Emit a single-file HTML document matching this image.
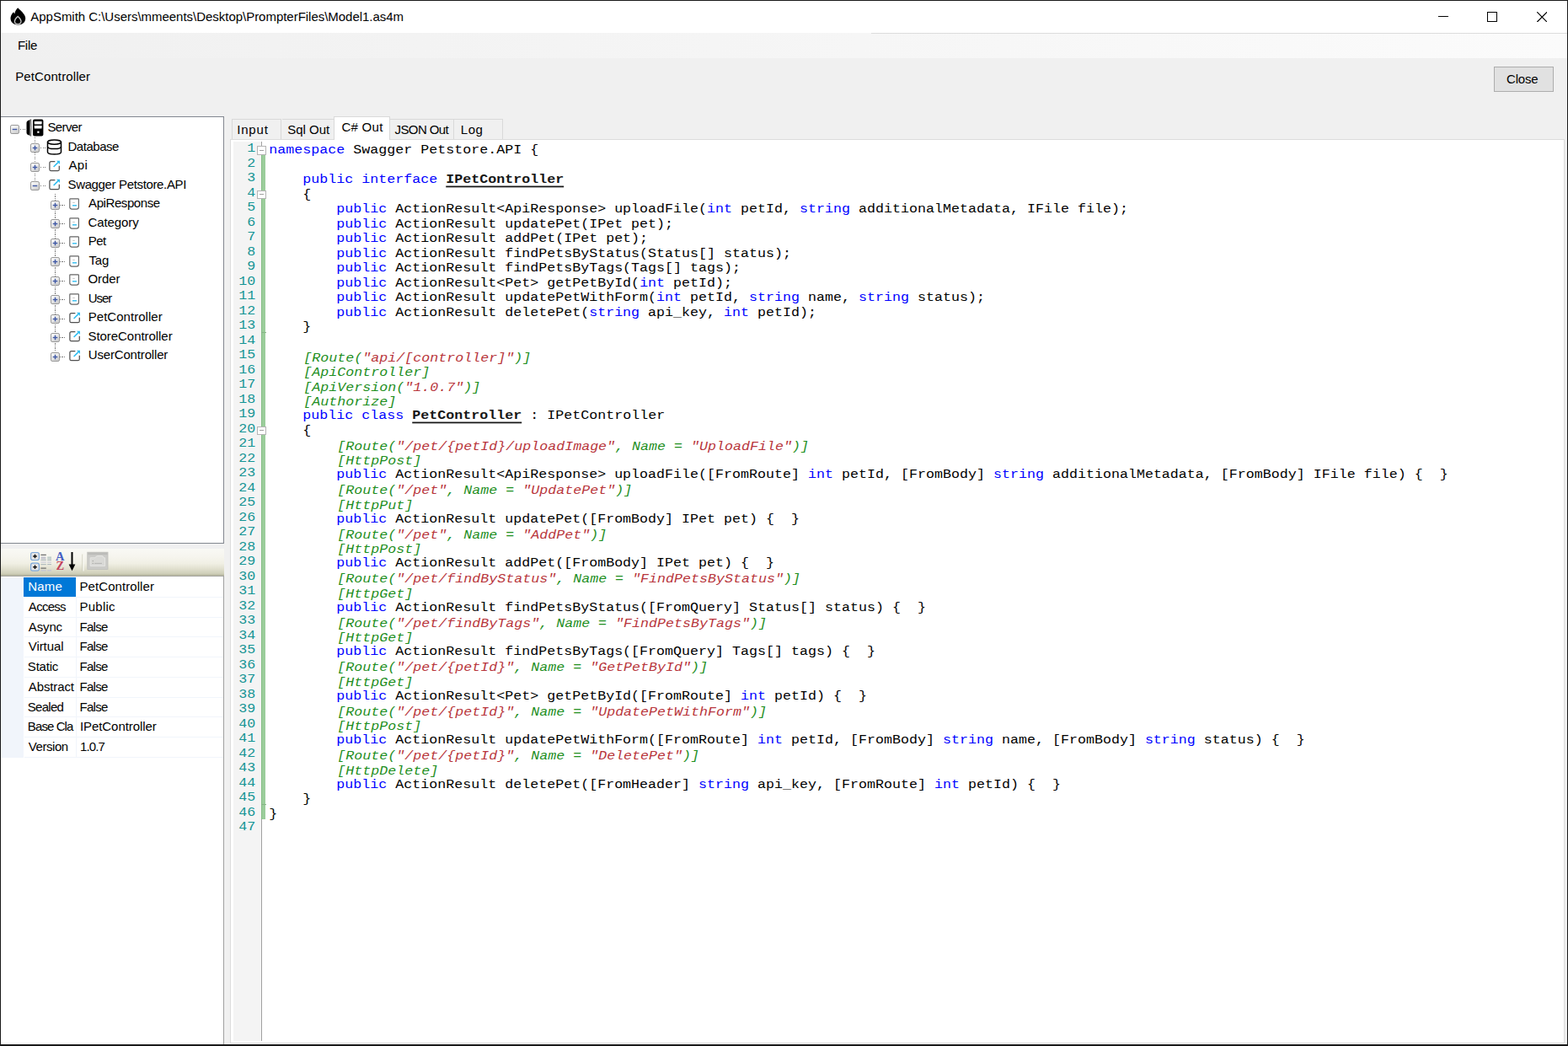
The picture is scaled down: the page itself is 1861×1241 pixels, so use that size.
<!DOCTYPE html>
<html lang="en">
<head>
<meta charset="utf-8">
<title>AppSmith</title>
<style>
*{box-sizing:border-box;margin:0;padding:0}
html,body{width:1861px;height:1241px;overflow:hidden;background:#f0f0f0}
body{position:relative;font-family:"Liberation Sans",sans-serif;font-size:15px;color:#000}
#win{position:absolute;left:0;top:0;width:1861px;height:1241px;background:#f0f0f0;overflow:hidden}
.abs{position:absolute}
/* frame */
#bt{left:0;top:0;width:1861px;height:1px;background:#1a1a1a}
#bl{left:0;top:0;width:1.3px;height:1241px;background:#1a1a1a}
#br{left:1860px;top:0;width:1px;height:1241px;background:#1a1a1a}
#bb{left:0;top:1239.3px;width:1861px;height:1.7px;background:#1a1a1a}
#title{left:1.3px;top:1px;width:1858.7px;height:38.2px;background:#fff}
#ttext{left:36.3px;top:10.5px;line-height:18px;white-space:pre;font-size:15px}
#menu{left:1.3px;top:39.2px;width:1858.7px;height:29.6px;background:linear-gradient(90deg,#f0f0f0 0%,#f1f1f1 8%,#f6f6f6 55%,#fbfbfb 100%)}
#mline{left:1034px;top:39px;width:826px;height:1px;background:#dcdcdc}
#mfile{left:20.9px;top:44.5px;line-height:18px;white-space:pre}
#plabel{left:18.2px;top:82px;line-height:18px;white-space:pre}
#close{left:1772.6px;top:79px;width:71.2px;height:29.8px;background:#e1e1e1;border:1px solid #adadad}
#closet{left:1788.0px;top:84.6px;line-height:18px;white-space:pre;letter-spacing:-0.175px}
/* tree */
#tree{left:1.3px;top:138.1px;width:264.7px;height:507.1px;background:#fff;border:1px solid #828790;border-left:0}
.dv{position:absolute;width:1px;background:repeating-linear-gradient(180deg,#7a7a7a 0 1.25px,transparent 1.25px 2.5px)}
.dh{position:absolute;height:1px;background:repeating-linear-gradient(90deg,#7a7a7a 0 1.25px,transparent 1.25px 2.5px)}
.ic{position:absolute;overflow:visible}
.tt{position:absolute;line-height:18px;white-space:pre;font-size:15px}
/* property grid */
#pgbg{left:1.3px;top:683.4px;width:264.6px;height:556.4px;background:#fff;border-top:1px solid #a5a5a0;border-right:1.1px solid #a0a0a0}
#pgtb{left:1.3px;top:650.7px;width:264.6px;height:32.8px;background:linear-gradient(180deg,#f9f9f5 0%,#f6f5ee 30%,#f0efe4 55%,#e0dfce 75%,#cfcfb9 92%,#b3b39b 100%)}
.pgm{position:absolute;left:1.3px;width:27.2px;background:#f1f5fb}
.pgv{position:absolute;left:90px;width:1px;background:#f1f5fb}
.pgh{position:absolute;left:28.5px;width:236.7px;height:1px;background:#f1f5fb}
.psel{position:absolute;left:28.4px;width:61.7px;background:#0078d7}
.pt{position:absolute;white-space:pre;font-size:15px;line-height:18px}
/* tabs */
.tab{position:absolute;top:141px;height:25px;background:#f0f0f0;border:1px solid #d9d9d9;border-bottom:0;border-left-width:0}
.tbt{position:absolute;white-space:pre;font-size:15px;line-height:18px;z-index:4}
.tab.first{border-left-width:1px}
.tsel{top:138.2px;height:28.2px;background:#fff;border:1px solid #d9d9d9;border-bottom:0;z-index:3}
#page{left:272.8px;top:165.2px;width:1584.4px;height:1072.6px;background:#fff;border:1px solid #dcdcdc}
/* editor */
#lm{left:276.8px;top:168px;width:33.4px;height:1066.8px;background:#f4f4f4}
#fl{left:310px;top:168px;width:1px;height:1066.8px;background:#a0a0a0}
#gb{left:310px;top:184px;width:5px;height:788.2px;background:#9bcd9b;border-left:1px solid #86bd86}
.fb{position:absolute;left:305px;width:10.8px;height:10.8px;background:#fff;border:1px solid #b4b4b4}
.fb i{position:absolute;left:2px;top:3.9px;width:4.8px;height:1px;background:#a0a0a0}
#ftick,.ftk{left:310px;top:953.8px;width:6px;height:1px;background:#86b486}
.ln{position:absolute;left:263.3px;width:40px;text-align:right;font-family:"Liberation Mono",monospace;font-size:16.667px;letter-spacing:0px;line-height:17.5px;color:#149494;white-space:pre;transform:scaleY(0.925);transform-origin:0 13.2px}
.cl{position:absolute;font-family:"Liberation Mono",monospace;font-size:16.667px;letter-spacing:0px;line-height:17.5px;color:#000;white-space:pre;transform:scaleY(0.88);transform-origin:0 13.2px}
.k{color:#0000ff}
.a{color:#1f8f1f;font-style:italic}
.s{color:#b8363c;font-style:italic}
.b{font-weight:bold;color:#161616;text-decoration:underline;text-decoration-thickness:1.6px;text-underline-offset:3.6px}

</style>
</head>
<body>
<div id="win">
<svg width="0" height="0" style="position:absolute"><defs><linearGradient id="xbg" x1="0" y1="0" x2="0.6" y2="1"><stop offset="0" stop-color="#fdfdfd"/><stop offset="0.45" stop-color="#ededed"/><stop offset="1" stop-color="#cfcfcf"/></linearGradient></defs></svg>
<div id="title" class="abs"></div>
<svg class="abs" style="left:11.8px;top:8.8px" width="19" height="21" viewBox="0 0 19 21"><path d="M9.2 0.2 C11.4 2.4 16 6 17.6 10 C19.2 14 17.6 18.2 13.6 19.8 C11.4 20.6 7.4 20.6 5.2 19.8 C1.2 18.2 -0.4 14 1 10 C1.6 8.2 2.8 6.6 4.2 5.2 C4.4 6.2 4.8 6.8 5.4 7.2 C5.8 4.4 7.2 2 9.2 0.2 Z" fill="#000"/><path d="M9.2 10.4 C10.8 12 13 13.8 13 16.2 C13 18.2 11.4 19.6 9.2 19.6 C7 19.6 5.4 18.2 5.4 16.2 C5.4 13.8 7.6 12 9.2 10.4 Z" fill="none" stroke="#c4c4c4" stroke-width="1.3"/></svg>
<div id="ttext" class="abs" style="letter-spacing:-0.026px">AppSmith C:\Users\mmeents\Desktop\PrompterFiles\Model1.as4m</div>
<div class="abs" style="left:1707px;top:18.8px;width:12px;height:1.2px;background:#000"></div>
<div class="abs" style="left:1765px;top:14px;width:12.2px;height:12.2px;border:1.2px solid #000"></div>
<svg class="abs" style="left:1824px;top:14px" width="12.4" height="12.4" viewBox="0 0 12.4 12.4"><path d="M0.2 0.2 L12.2 12.2 M12.2 0.2 L0.2 12.2" stroke="#000" stroke-width="1.2" fill="none"/></svg>
<div id="menu" class="abs"></div>
<div id="mline" class="abs"></div>
<div id="mfile" class="abs" style="letter-spacing:-0.233px">File</div>
<div id="plabel" class="abs" style="letter-spacing:0.108px">PetController</div>
<div id="close" class="abs"></div>
<div id="closet" class="abs">Close</div>

<div id="tree" class="abs"></div>
<div class="dv" style="left:41.00px;top:163.20px;height:51.50px"></div>
<div class="dv" style="left:64.80px;top:229.70px;height:187.50px"></div>
<div class="dh" style="left:23.60px;top:152.70px;width:6.50px"></div>
<svg class="ic" style="left:12.10px;top:147.70px" width="11" height="11" viewBox="0 0 11 11"><rect x="0.5" y="0.5" width="10" height="10" rx="1.6" fill="url(#xbg)" stroke="#989898" stroke-width="1"/><path d="M2.7 5.5 H8.3" stroke="#3f58a5" stroke-width="1.4"/></svg>
<svg class="ic" style="left:30.8px;top:141.00px" width="21" height="21" viewBox="0 0 21 21"><path d="M0.5 4.5 Q0.5 2.5 2.5 2 L4.6 1 L4.6 20 L2.5 19 Q0.5 18.5 0.5 16.5 Z" fill="#000"/><path d="M5.6 0.3 Q6.6 10.5 5.6 20.7" stroke="#000" stroke-width="0.7" fill="none"/><rect x="8" y="0.6" width="12.4" height="19.8" rx="2" fill="#000"/><rect x="9.8" y="3" width="8.8" height="3.4" rx="0.4" fill="#fff"/><rect x="9.8" y="8" width="8.8" height="3.4" rx="0.4" fill="#fff"/><rect x="13.3" y="14.6" width="2.2" height="2.2" fill="#fff"/></svg>
<div class="tt" style="left:56.39px;top:142.10px;letter-spacing:-0.604px">Server</div>
<div class="dh" style="left:47.50px;top:175.20px;width:6.50px"></div>
<svg class="ic" style="left:36.00px;top:170.20px" width="11" height="11" viewBox="0 0 11 11"><rect x="0.5" y="0.5" width="10" height="10" rx="1.6" fill="url(#xbg)" stroke="#989898" stroke-width="1"/><path d="M2.7 5.5 H8.3" stroke="#3f58a5" stroke-width="1.4"/><path d="M5.5 2.7 V8.3" stroke="#3f58a5" stroke-width="1.4"/></svg>
<svg class="ic" style="left:55.3px;top:164.50px" width="19" height="19" viewBox="0 0 19 19"><g fill="none" stroke="#000" stroke-width="1.5"><ellipse cx="9.5" cy="3.6" rx="8" ry="2.6"/><path d="M1.5 3.6 V15.2 C1.5 17 5 18 9.5 18 S17.5 17 17.5 15.2 V3.6"/><path d="M1.5 9 C1.5 10.8 5 11.6 9.5 11.6 S17.5 10.8 17.5 9"/></g></svg>
<div class="tt" style="left:80.51px;top:164.60px;letter-spacing:-0.47px">Database</div>
<div class="dh" style="left:47.50px;top:197.70px;width:6.50px"></div>
<svg class="ic" style="left:36.00px;top:192.70px" width="11" height="11" viewBox="0 0 11 11"><rect x="0.5" y="0.5" width="10" height="10" rx="1.6" fill="url(#xbg)" stroke="#989898" stroke-width="1"/><path d="M2.7 5.5 H8.3" stroke="#3f58a5" stroke-width="1.4"/><path d="M5.5 2.7 V8.3" stroke="#3f58a5" stroke-width="1.4"/></svg>
<svg class="ic" style="left:58.0px;top:189.80px" width="14" height="14" viewBox="0 0 14 14"><path d="M7.4 1.7 H2.7 Q0.9 1.7 0.9 3.5 V10.9 Q0.9 12.7 2.7 12.7 H10.5 Q12.3 12.7 12.3 10.9 V6.8" fill="none" stroke="#505050" stroke-width="1.25"/><path d="M5.6 8 L11 2.6" stroke="#2fbdf0" stroke-width="1.5" fill="none"/><path d="M9 0.7 H13 V4.9 Z" fill="#2fbdf0"/></svg>
<div class="tt" style="left:81.51px;top:187.10px;letter-spacing:0.333px">Api</div>
<div class="dh" style="left:47.50px;top:220.20px;width:6.50px"></div>
<svg class="ic" style="left:36.00px;top:215.20px" width="11" height="11" viewBox="0 0 11 11"><rect x="0.5" y="0.5" width="10" height="10" rx="1.6" fill="url(#xbg)" stroke="#989898" stroke-width="1"/><path d="M2.7 5.5 H8.3" stroke="#3f58a5" stroke-width="1.4"/></svg>
<svg class="ic" style="left:58.0px;top:212.30px" width="14" height="14" viewBox="0 0 14 14"><path d="M7.4 1.7 H2.7 Q0.9 1.7 0.9 3.5 V10.9 Q0.9 12.7 2.7 12.7 H10.5 Q12.3 12.7 12.3 10.9 V6.8" fill="none" stroke="#505050" stroke-width="1.25"/><path d="M5.6 8 L11 2.6" stroke="#2fbdf0" stroke-width="1.5" fill="none"/><path d="M9 0.7 H13 V4.9 Z" fill="#2fbdf0"/></svg>
<div class="tt" style="left:80.51px;top:209.60px;letter-spacing:-0.354px">Swagger Petstore.API</div>
<div class="dh" style="left:71.30px;top:242.70px;width:6.50px"></div>
<svg class="ic" style="left:59.80px;top:237.70px" width="11" height="11" viewBox="0 0 11 11"><rect x="0.5" y="0.5" width="10" height="10" rx="1.6" fill="url(#xbg)" stroke="#989898" stroke-width="1"/><path d="M2.7 5.5 H8.3" stroke="#3f58a5" stroke-width="1.4"/><path d="M5.5 2.7 V8.3" stroke="#3f58a5" stroke-width="1.4"/></svg>
<svg class="ic" style="left:82.0px;top:235.30px" width="13" height="14" viewBox="0 0 13 14"><path d="M1.5 0.9 H10.7 Q11.4 0.9 11.4 1.6 V10.4 Q11.4 13.1 8.8 13.1 H3.4 Q0.8 13.1 0.8 10.4 V1.6 Q0.8 0.9 1.5 0.9 Z" fill="#fff" stroke="#666" stroke-width="1.15"/><path d="M4.2 5.4 H6.8" stroke="#c4c4c4" stroke-width="1"/><path d="M4 8.8 H9" stroke="#2fbdf0" stroke-width="1.4"/></svg>
<div class="tt" style="left:105.11px;top:232.10px;letter-spacing:-0.427px">ApiResponse</div>
<div class="dh" style="left:71.30px;top:265.20px;width:6.50px"></div>
<svg class="ic" style="left:59.80px;top:260.20px" width="11" height="11" viewBox="0 0 11 11"><rect x="0.5" y="0.5" width="10" height="10" rx="1.6" fill="url(#xbg)" stroke="#989898" stroke-width="1"/><path d="M2.7 5.5 H8.3" stroke="#3f58a5" stroke-width="1.4"/><path d="M5.5 2.7 V8.3" stroke="#3f58a5" stroke-width="1.4"/></svg>
<svg class="ic" style="left:82.0px;top:257.80px" width="13" height="14" viewBox="0 0 13 14"><path d="M1.5 0.9 H10.7 Q11.4 0.9 11.4 1.6 V10.4 Q11.4 13.1 8.8 13.1 H3.4 Q0.8 13.1 0.8 10.4 V1.6 Q0.8 0.9 1.5 0.9 Z" fill="#fff" stroke="#666" stroke-width="1.15"/><path d="M4.2 5.4 H6.8" stroke="#c4c4c4" stroke-width="1"/><path d="M4 8.8 H9" stroke="#2fbdf0" stroke-width="1.4"/></svg>
<div class="tt" style="left:104.49px;top:254.60px;letter-spacing:-0.097px">Category</div>
<div class="dh" style="left:71.30px;top:287.70px;width:6.50px"></div>
<svg class="ic" style="left:59.80px;top:282.70px" width="11" height="11" viewBox="0 0 11 11"><rect x="0.5" y="0.5" width="10" height="10" rx="1.6" fill="url(#xbg)" stroke="#989898" stroke-width="1"/><path d="M2.7 5.5 H8.3" stroke="#3f58a5" stroke-width="1.4"/><path d="M5.5 2.7 V8.3" stroke="#3f58a5" stroke-width="1.4"/></svg>
<svg class="ic" style="left:82.0px;top:280.30px" width="13" height="14" viewBox="0 0 13 14"><path d="M1.5 0.9 H10.7 Q11.4 0.9 11.4 1.6 V10.4 Q11.4 13.1 8.8 13.1 H3.4 Q0.8 13.1 0.8 10.4 V1.6 Q0.8 0.9 1.5 0.9 Z" fill="#fff" stroke="#666" stroke-width="1.15"/><path d="M4.2 5.4 H6.8" stroke="#c4c4c4" stroke-width="1"/><path d="M4 8.8 H9" stroke="#2fbdf0" stroke-width="1.4"/></svg>
<div class="tt" style="left:104.75px;top:277.10px;letter-spacing:-0.505px">Pet</div>
<div class="dh" style="left:71.30px;top:310.20px;width:6.50px"></div>
<svg class="ic" style="left:59.80px;top:305.20px" width="11" height="11" viewBox="0 0 11 11"><rect x="0.5" y="0.5" width="10" height="10" rx="1.6" fill="url(#xbg)" stroke="#989898" stroke-width="1"/><path d="M2.7 5.5 H8.3" stroke="#3f58a5" stroke-width="1.4"/><path d="M5.5 2.7 V8.3" stroke="#3f58a5" stroke-width="1.4"/></svg>
<svg class="ic" style="left:82.0px;top:302.80px" width="13" height="14" viewBox="0 0 13 14"><path d="M1.5 0.9 H10.7 Q11.4 0.9 11.4 1.6 V10.4 Q11.4 13.1 8.8 13.1 H3.4 Q0.8 13.1 0.8 10.4 V1.6 Q0.8 0.9 1.5 0.9 Z" fill="#fff" stroke="#666" stroke-width="1.15"/><path d="M4.2 5.4 H6.8" stroke="#c4c4c4" stroke-width="1"/><path d="M4 8.8 H9" stroke="#2fbdf0" stroke-width="1.4"/></svg>
<div class="tt" style="left:105.49px;top:299.60px;letter-spacing:-0.216px">Tag</div>
<div class="dh" style="left:71.30px;top:332.70px;width:6.50px"></div>
<svg class="ic" style="left:59.80px;top:327.70px" width="11" height="11" viewBox="0 0 11 11"><rect x="0.5" y="0.5" width="10" height="10" rx="1.6" fill="url(#xbg)" stroke="#989898" stroke-width="1"/><path d="M2.7 5.5 H8.3" stroke="#3f58a5" stroke-width="1.4"/><path d="M5.5 2.7 V8.3" stroke="#3f58a5" stroke-width="1.4"/></svg>
<svg class="ic" style="left:82.0px;top:325.30px" width="13" height="14" viewBox="0 0 13 14"><path d="M1.5 0.9 H10.7 Q11.4 0.9 11.4 1.6 V10.4 Q11.4 13.1 8.8 13.1 H3.4 Q0.8 13.1 0.8 10.4 V1.6 Q0.8 0.9 1.5 0.9 Z" fill="#fff" stroke="#666" stroke-width="1.15"/><path d="M4.2 5.4 H6.8" stroke="#c4c4c4" stroke-width="1"/><path d="M4 8.8 H9" stroke="#2fbdf0" stroke-width="1.4"/></svg>
<div class="tt" style="left:104.49px;top:322.10px;letter-spacing:-0.061px">Order</div>
<div class="dh" style="left:71.30px;top:355.20px;width:6.50px"></div>
<svg class="ic" style="left:59.80px;top:350.20px" width="11" height="11" viewBox="0 0 11 11"><rect x="0.5" y="0.5" width="10" height="10" rx="1.6" fill="url(#xbg)" stroke="#989898" stroke-width="1"/><path d="M2.7 5.5 H8.3" stroke="#3f58a5" stroke-width="1.4"/><path d="M5.5 2.7 V8.3" stroke="#3f58a5" stroke-width="1.4"/></svg>
<svg class="ic" style="left:82.0px;top:347.80px" width="13" height="14" viewBox="0 0 13 14"><path d="M1.5 0.9 H10.7 Q11.4 0.9 11.4 1.6 V10.4 Q11.4 13.1 8.8 13.1 H3.4 Q0.8 13.1 0.8 10.4 V1.6 Q0.8 0.9 1.5 0.9 Z" fill="#fff" stroke="#666" stroke-width="1.15"/><path d="M4.2 5.4 H6.8" stroke="#c4c4c4" stroke-width="1"/><path d="M4 8.8 H9" stroke="#2fbdf0" stroke-width="1.4"/></svg>
<div class="tt" style="left:104.75px;top:344.60px;letter-spacing:-1.091px">User</div>
<div class="dh" style="left:71.30px;top:377.70px;width:6.50px"></div>
<svg class="ic" style="left:59.80px;top:372.70px" width="11" height="11" viewBox="0 0 11 11"><rect x="0.5" y="0.5" width="10" height="10" rx="1.6" fill="url(#xbg)" stroke="#989898" stroke-width="1"/><path d="M2.7 5.5 H8.3" stroke="#3f58a5" stroke-width="1.4"/><path d="M5.5 2.7 V8.3" stroke="#3f58a5" stroke-width="1.4"/></svg>
<svg class="ic" style="left:82.0px;top:369.80px" width="14" height="14" viewBox="0 0 14 14"><path d="M7.4 1.7 H2.7 Q0.9 1.7 0.9 3.5 V10.9 Q0.9 12.7 2.7 12.7 H10.5 Q12.3 12.7 12.3 10.9 V6.8" fill="none" stroke="#505050" stroke-width="1.25"/><path d="M5.6 8 L11 2.6" stroke="#2fbdf0" stroke-width="1.5" fill="none"/><path d="M9 0.7 H13 V4.9 Z" fill="#2fbdf0"/></svg>
<div class="tt" style="left:104.75px;top:367.10px;letter-spacing:0.034px">PetController</div>
<div class="dh" style="left:71.30px;top:400.20px;width:6.50px"></div>
<svg class="ic" style="left:59.80px;top:395.20px" width="11" height="11" viewBox="0 0 11 11"><rect x="0.5" y="0.5" width="10" height="10" rx="1.6" fill="url(#xbg)" stroke="#989898" stroke-width="1"/><path d="M2.7 5.5 H8.3" stroke="#3f58a5" stroke-width="1.4"/><path d="M5.5 2.7 V8.3" stroke="#3f58a5" stroke-width="1.4"/></svg>
<svg class="ic" style="left:82.0px;top:392.30px" width="14" height="14" viewBox="0 0 14 14"><path d="M7.4 1.7 H2.7 Q0.9 1.7 0.9 3.5 V10.9 Q0.9 12.7 2.7 12.7 H10.5 Q12.3 12.7 12.3 10.9 V6.8" fill="none" stroke="#505050" stroke-width="1.25"/><path d="M5.6 8 L11 2.6" stroke="#2fbdf0" stroke-width="1.5" fill="none"/><path d="M9 0.7 H13 V4.9 Z" fill="#2fbdf0"/></svg>
<div class="tt" style="left:104.49px;top:389.60px;letter-spacing:-0.05px">StoreController</div>
<div class="dh" style="left:71.30px;top:422.70px;width:6.50px"></div>
<svg class="ic" style="left:59.80px;top:417.70px" width="11" height="11" viewBox="0 0 11 11"><rect x="0.5" y="0.5" width="10" height="10" rx="1.6" fill="url(#xbg)" stroke="#989898" stroke-width="1"/><path d="M2.7 5.5 H8.3" stroke="#3f58a5" stroke-width="1.4"/><path d="M5.5 2.7 V8.3" stroke="#3f58a5" stroke-width="1.4"/></svg>
<svg class="ic" style="left:82.0px;top:414.80px" width="14" height="14" viewBox="0 0 14 14"><path d="M7.4 1.7 H2.7 Q0.9 1.7 0.9 3.5 V10.9 Q0.9 12.7 2.7 12.7 H10.5 Q12.3 12.7 12.3 10.9 V6.8" fill="none" stroke="#505050" stroke-width="1.25"/><path d="M5.6 8 L11 2.6" stroke="#2fbdf0" stroke-width="1.5" fill="none"/><path d="M9 0.7 H13 V4.9 Z" fill="#2fbdf0"/></svg>
<div class="tt" style="left:104.75px;top:412.10px;letter-spacing:-0.163px">UserController</div>

<div id="pgbg" class="abs"></div>
<div id="pgtb" class="abs"></div>
<svg class="abs" style="left:35px;top:653px" width="96" height="27" viewBox="35 653 96 27">
<g>
<rect x="36.6" y="655.5" width="9.8" height="9" rx="2.2" fill="#e6e6e6" stroke="#7ba7da" stroke-width="1.2"/>
<rect x="36.6" y="668.2" width="9.8" height="9" rx="2.2" fill="#e6e6e6" stroke="#7ba7da" stroke-width="1.2"/>
<path d="M39.2 660 H43.8 M41.5 657.7 V662.3 M39.2 672.7 H43.8 M41.5 670.4 V675" stroke="#111" stroke-width="1.5" fill="none"/>
<path d="M48.4 658.3 H54.8 M48.4 674.2 H54.8" stroke="#6e6e6e" stroke-width="1.2"/>
<rect x="48.6" y="660.4" width="5.8" height="3" fill="#c6c6cf"/><rect x="56.2" y="660.4" width="4.8" height="3" fill="#c3cfcb"/>
<path d="M48.4 664.4 H54.8 M56.2 664.4 H61 M48.4 669.6 H54.8 M56.2 669.6 H61" stroke="#a9b5b9" stroke-width="1"/>
<path d="M48.4 667 H54.8 M56.2 667 H61 M48.4 676.8 H54.8 M56.2 676.8 H61" stroke="#c2c4d6" stroke-width="1.2"/>
</g>
<text x="66" y="664.8" font-family="Liberation Serif, serif" font-weight="bold" font-size="14.5" fill="#4560c4">A</text>
<text x="66.6" y="676.4" font-family="Liberation Serif, serif" font-weight="bold" font-size="14.5" fill="#c2445c">Z</text>
<path d="M85.5 655 V672" stroke="#000" stroke-width="2"/>
<path d="M81.6 669.4 H89.4 L85.5 677.2 Z" fill="#000"/>
<path d="M98 657.6 V677.6" stroke="#c9c8b6" stroke-width="1"/>
<path d="M99 657.6 V677.6" stroke="#fbfbf6" stroke-width="1.2"/>
<rect x="103.8" y="655.2" width="24.2" height="20.2" fill="#cbcbc8" stroke="#bdbdb9" stroke-width="0.8"/>
<rect x="104.2" y="655.6" width="23.4" height="2.6" fill="#bcbcb9"/>
<path d="M107.2 661.8 H113 Q114 659.6 116 659.6 H121 Q122.6 659.6 123 661.8 H124.6 V671.4 H107.2 Z" fill="#d9d9d6" stroke="#e8e8e5" stroke-width="0.9"/>
<path d="M109.6 665.6 H111 M109.6 668.4 H111" stroke="#a4a4a2" stroke-width="1"/>
<path d="M112 668.4 H121" stroke="#b4b4b2" stroke-width="1"/>
</svg>
<div class="pgm" style="top:685.0px;height:214.25px"></div>
<div class="pgv" style="top:685.0px;height:213.75px"></div>
<div class="psel" style="top:685.00px;height:22.55px"></div>
<div class="pt" style="left:33.31px;top:687.20px;letter-spacing:0.141px;color:#fff">Name</div>
<div class="pt" style="left:94.55px;top:687.20px;letter-spacing:0.068px">PetController</div>
<div class="pgh" style="top:707.75px"></div>
<div class="pt" style="left:33.85px;top:710.95px;letter-spacing:-0.722px">Access</div>
<div class="pt" style="left:94.55px;top:710.95px;letter-spacing:0.235px">Public</div>
<div class="pgh" style="top:731.50px"></div>
<div class="pt" style="left:33.85px;top:734.70px;letter-spacing:-0.144px">Async</div>
<div class="pt" style="left:94.55px;top:734.70px;letter-spacing:-0.738px">False</div>
<div class="pgh" style="top:755.25px"></div>
<div class="pt" style="left:33.85px;top:758.45px;letter-spacing:-0.104px">Virtual</div>
<div class="pt" style="left:94.55px;top:758.45px;letter-spacing:-0.738px">False</div>
<div class="pgh" style="top:779.00px"></div>
<div class="pt" style="left:32.84px;top:782.20px;letter-spacing:-0.205px">Static</div>
<div class="pt" style="left:94.55px;top:782.20px;letter-spacing:-0.738px">False</div>
<div class="pgh" style="top:802.75px"></div>
<div class="pt" style="left:33.84px;top:805.95px;letter-spacing:-0.121px">Abstract</div>
<div class="pt" style="left:94.55px;top:805.95px;letter-spacing:-0.738px">False</div>
<div class="pgh" style="top:826.50px"></div>
<div class="pt" style="left:32.84px;top:829.70px;letter-spacing:-0.742px">Sealed</div>
<div class="pt" style="left:94.55px;top:829.70px;letter-spacing:-0.738px">False</div>
<div class="pgh" style="top:850.25px"></div>
<div class="pt" style="left:32.84px;top:853.45px;letter-spacing:-0.9px">Base Cla</div>
<div class="pt" style="left:94.89px;top:853.45px;letter-spacing:-0.057px">IPetController</div>
<div class="pgh" style="top:874.00px"></div>
<div class="pt" style="left:33.84px;top:877.20px;letter-spacing:-0.458px">Version</div>
<div class="pt" style="left:94.89px;top:877.20px;letter-spacing:-0.836px">1.0.7</div>
<div class="pgh" style="top:897.75px"></div>

<div class="tab first" style="left:275.20px;width:59.30px"></div>
<div class="tbt" style="left:281.25px;top:144.8px;letter-spacing:0.802px">Input</div>
<div class="tab" style="left:334.50px;width:62.30px"></div>
<div class="tbt" style="left:341.22px;top:144.8px;letter-spacing:-0.009px">Sql Out</div>
<div class="tab tsel" style="left:396.30px;width:66.90px"></div>
<div class="tbt" style="left:405.45px;top:141.9px;letter-spacing:0.28px">C# Out</div>
<div class="tab" style="left:463.20px;width:75.80px"></div>
<div class="tbt" style="left:468.55px;top:144.8px;letter-spacing:-0.594px">JSON Out</div>
<div class="tab" style="left:539.00px;width:58.00px"></div>
<div class="tbt" style="left:546.87px;top:144.8px;letter-spacing:0.495px">Log</div>
<div id="page" class="abs"></div>
<div id="lm" class="abs"></div>
<div id="fl" class="abs"></div>
<div id="gb" class="abs"></div>
<div id="ftick" class="abs"></div>
<div class="abs ftk" style="top:393.9px"></div>
<div class="fb" style="top:173px"><i></i></div>
<div class="fb" style="top:225.5px"><i></i></div>
<div class="fb" style="top:505.5px"><i></i></div>
<div class="ln" style="top:167.00px">1</div>
<div class="cl" style="top:169.10px;left:319.30px"><span class="k">namespace</span> Swagger Petstore.API {</div>
<div class="ln" style="top:184.50px">2</div>
<div class="ln" style="top:202.00px">3</div>
<div class="cl" style="top:204.10px;left:319.30px">    <span class="k">public</span> <span class="k">interface</span> <span class="b">IPetController</span></div>
<div class="ln" style="top:219.50px">4</div>
<div class="cl" style="top:221.60px;left:319.30px">    {</div>
<div class="ln" style="top:237.00px">5</div>
<div class="cl" style="top:239.10px;left:319.30px">        <span class="k">public</span> ActionResult&lt;ApiResponse&gt; uploadFile(<span class="k">int</span> petId, <span class="k">string</span> additionalMetadata, IFile file);</div>
<div class="ln" style="top:254.50px">6</div>
<div class="cl" style="top:256.60px;left:319.30px">        <span class="k">public</span> ActionResult updatePet(IPet pet);</div>
<div class="ln" style="top:272.00px">7</div>
<div class="cl" style="top:274.10px;left:319.30px">        <span class="k">public</span> ActionResult addPet(IPet pet);</div>
<div class="ln" style="top:289.50px">8</div>
<div class="cl" style="top:291.60px;left:319.30px">        <span class="k">public</span> ActionResult findPetsByStatus(Status[] status);</div>
<div class="ln" style="top:307.00px">9</div>
<div class="cl" style="top:309.10px;left:319.30px">        <span class="k">public</span> ActionResult findPetsByTags(Tags[] tags);</div>
<div class="ln" style="top:324.50px">10</div>
<div class="cl" style="top:326.60px;left:319.30px">        <span class="k">public</span> ActionResult&lt;Pet&gt; getPetById(<span class="k">int</span> petId);</div>
<div class="ln" style="top:342.00px">11</div>
<div class="cl" style="top:344.10px;left:319.30px">        <span class="k">public</span> ActionResult updatePetWithForm(<span class="k">int</span> petId, <span class="k">string</span> name, <span class="k">string</span> status);</div>
<div class="ln" style="top:359.50px">12</div>
<div class="cl" style="top:361.60px;left:319.30px">        <span class="k">public</span> ActionResult deletePet(<span class="k">string</span> api_key, <span class="k">int</span> petId);</div>
<div class="ln" style="top:377.00px">13</div>
<div class="cl" style="top:379.10px;left:319.30px">    }</div>
<div class="ln" style="top:394.50px">14</div>
<div class="ln" style="top:412.00px">15</div>
<div class="cl" style="top:415.50px;left:320.30px">    <span class="a">[Route(</span><span class="s">"api/[controller]"</span><span class="a">)]</span></div>
<div class="ln" style="top:429.50px">16</div>
<div class="cl" style="top:433.00px;left:320.30px">    <span class="a">[ApiController]</span></div>
<div class="ln" style="top:447.00px">17</div>
<div class="cl" style="top:450.50px;left:320.30px">    <span class="a">[ApiVersion(</span><span class="s">"1.0.7"</span><span class="a">)]</span></div>
<div class="ln" style="top:464.50px">18</div>
<div class="cl" style="top:468.00px;left:320.30px">    <span class="a">[Authorize]</span></div>
<div class="ln" style="top:482.00px">19</div>
<div class="cl" style="top:484.10px;left:319.30px">    <span class="k">public</span> <span class="k">class</span> <span class="b">PetController</span> : IPetController</div>
<div class="ln" style="top:499.50px">20</div>
<div class="cl" style="top:501.60px;left:319.30px">    {</div>
<div class="ln" style="top:517.00px">21</div>
<div class="cl" style="top:520.50px;left:320.30px">        <span class="a">[Route(</span><span class="s">"/pet/{petId}/uploadImage"</span><span class="a">, Name = </span><span class="s">"UploadFile"</span><span class="a">)]</span></div>
<div class="ln" style="top:534.50px">22</div>
<div class="cl" style="top:538.00px;left:320.30px">        <span class="a">[HttpPost]</span></div>
<div class="ln" style="top:552.00px">23</div>
<div class="cl" style="top:554.10px;left:319.30px">        <span class="k">public</span> ActionResult&lt;ApiResponse&gt; uploadFile([FromRoute] <span class="k">int</span> petId, [FromBody] <span class="k">string</span> additionalMetadata, [FromBody] IFile file) {  }</div>
<div class="ln" style="top:569.50px">24</div>
<div class="cl" style="top:573.00px;left:320.30px">        <span class="a">[Route(</span><span class="s">"/pet"</span><span class="a">, Name = </span><span class="s">"UpdatePet"</span><span class="a">)]</span></div>
<div class="ln" style="top:587.00px">25</div>
<div class="cl" style="top:590.50px;left:320.30px">        <span class="a">[HttpPut]</span></div>
<div class="ln" style="top:604.50px">26</div>
<div class="cl" style="top:606.60px;left:319.30px">        <span class="k">public</span> ActionResult updatePet([FromBody] IPet pet) {  }</div>
<div class="ln" style="top:622.00px">27</div>
<div class="cl" style="top:625.50px;left:320.30px">        <span class="a">[Route(</span><span class="s">"/pet"</span><span class="a">, Name = </span><span class="s">"AddPet"</span><span class="a">)]</span></div>
<div class="ln" style="top:639.50px">28</div>
<div class="cl" style="top:643.00px;left:320.30px">        <span class="a">[HttpPost]</span></div>
<div class="ln" style="top:657.00px">29</div>
<div class="cl" style="top:659.10px;left:319.30px">        <span class="k">public</span> ActionResult addPet([FromBody] IPet pet) {  }</div>
<div class="ln" style="top:674.50px">30</div>
<div class="cl" style="top:678.00px;left:320.30px">        <span class="a">[Route(</span><span class="s">"/pet/findByStatus"</span><span class="a">, Name = </span><span class="s">"FindPetsByStatus"</span><span class="a">)]</span></div>
<div class="ln" style="top:692.00px">31</div>
<div class="cl" style="top:695.50px;left:320.30px">        <span class="a">[HttpGet]</span></div>
<div class="ln" style="top:709.50px">32</div>
<div class="cl" style="top:711.60px;left:319.30px">        <span class="k">public</span> ActionResult findPetsByStatus([FromQuery] Status[] status) {  }</div>
<div class="ln" style="top:727.00px">33</div>
<div class="cl" style="top:730.50px;left:320.30px">        <span class="a">[Route(</span><span class="s">"/pet/findByTags"</span><span class="a">, Name = </span><span class="s">"FindPetsByTags"</span><span class="a">)]</span></div>
<div class="ln" style="top:744.50px">34</div>
<div class="cl" style="top:748.00px;left:320.30px">        <span class="a">[HttpGet]</span></div>
<div class="ln" style="top:762.00px">35</div>
<div class="cl" style="top:764.10px;left:319.30px">        <span class="k">public</span> ActionResult findPetsByTags([FromQuery] Tags[] tags) {  }</div>
<div class="ln" style="top:779.50px">36</div>
<div class="cl" style="top:783.00px;left:320.30px">        <span class="a">[Route(</span><span class="s">"/pet/{petId}"</span><span class="a">, Name = </span><span class="s">"GetPetById"</span><span class="a">)]</span></div>
<div class="ln" style="top:797.00px">37</div>
<div class="cl" style="top:800.50px;left:320.30px">        <span class="a">[HttpGet]</span></div>
<div class="ln" style="top:814.50px">38</div>
<div class="cl" style="top:816.60px;left:319.30px">        <span class="k">public</span> ActionResult&lt;Pet&gt; getPetById([FromRoute] <span class="k">int</span> petId) {  }</div>
<div class="ln" style="top:832.00px">39</div>
<div class="cl" style="top:835.50px;left:320.30px">        <span class="a">[Route(</span><span class="s">"/pet/{petId}"</span><span class="a">, Name = </span><span class="s">"UpdatePetWithForm"</span><span class="a">)]</span></div>
<div class="ln" style="top:849.50px">40</div>
<div class="cl" style="top:853.00px;left:320.30px">        <span class="a">[HttpPost]</span></div>
<div class="ln" style="top:867.00px">41</div>
<div class="cl" style="top:869.10px;left:319.30px">        <span class="k">public</span> ActionResult updatePetWithForm([FromRoute] <span class="k">int</span> petId, [FromBody] <span class="k">string</span> name, [FromBody] <span class="k">string</span> status) {  }</div>
<div class="ln" style="top:884.50px">42</div>
<div class="cl" style="top:888.00px;left:320.30px">        <span class="a">[Route(</span><span class="s">"/pet/{petId}"</span><span class="a">, Name = </span><span class="s">"DeletePet"</span><span class="a">)]</span></div>
<div class="ln" style="top:902.00px">43</div>
<div class="cl" style="top:905.50px;left:320.30px">        <span class="a">[HttpDelete]</span></div>
<div class="ln" style="top:919.50px">44</div>
<div class="cl" style="top:921.60px;left:319.30px">        <span class="k">public</span> ActionResult deletePet([FromHeader] <span class="k">string</span> api_key, [FromRoute] <span class="k">int</span> petId) {  }</div>
<div class="ln" style="top:937.00px">45</div>
<div class="cl" style="top:939.10px;left:319.30px">    }</div>
<div class="ln" style="top:954.50px">46</div>
<div class="cl" style="top:956.60px;left:319.30px">}</div>
<div class="ln" style="top:972.00px">47</div>

<div id="bt" class="abs"></div>
<div id="bl" class="abs"></div>
<div id="br" class="abs"></div>
<div id="bb" class="abs"></div>
</div>
</body>
</html>
